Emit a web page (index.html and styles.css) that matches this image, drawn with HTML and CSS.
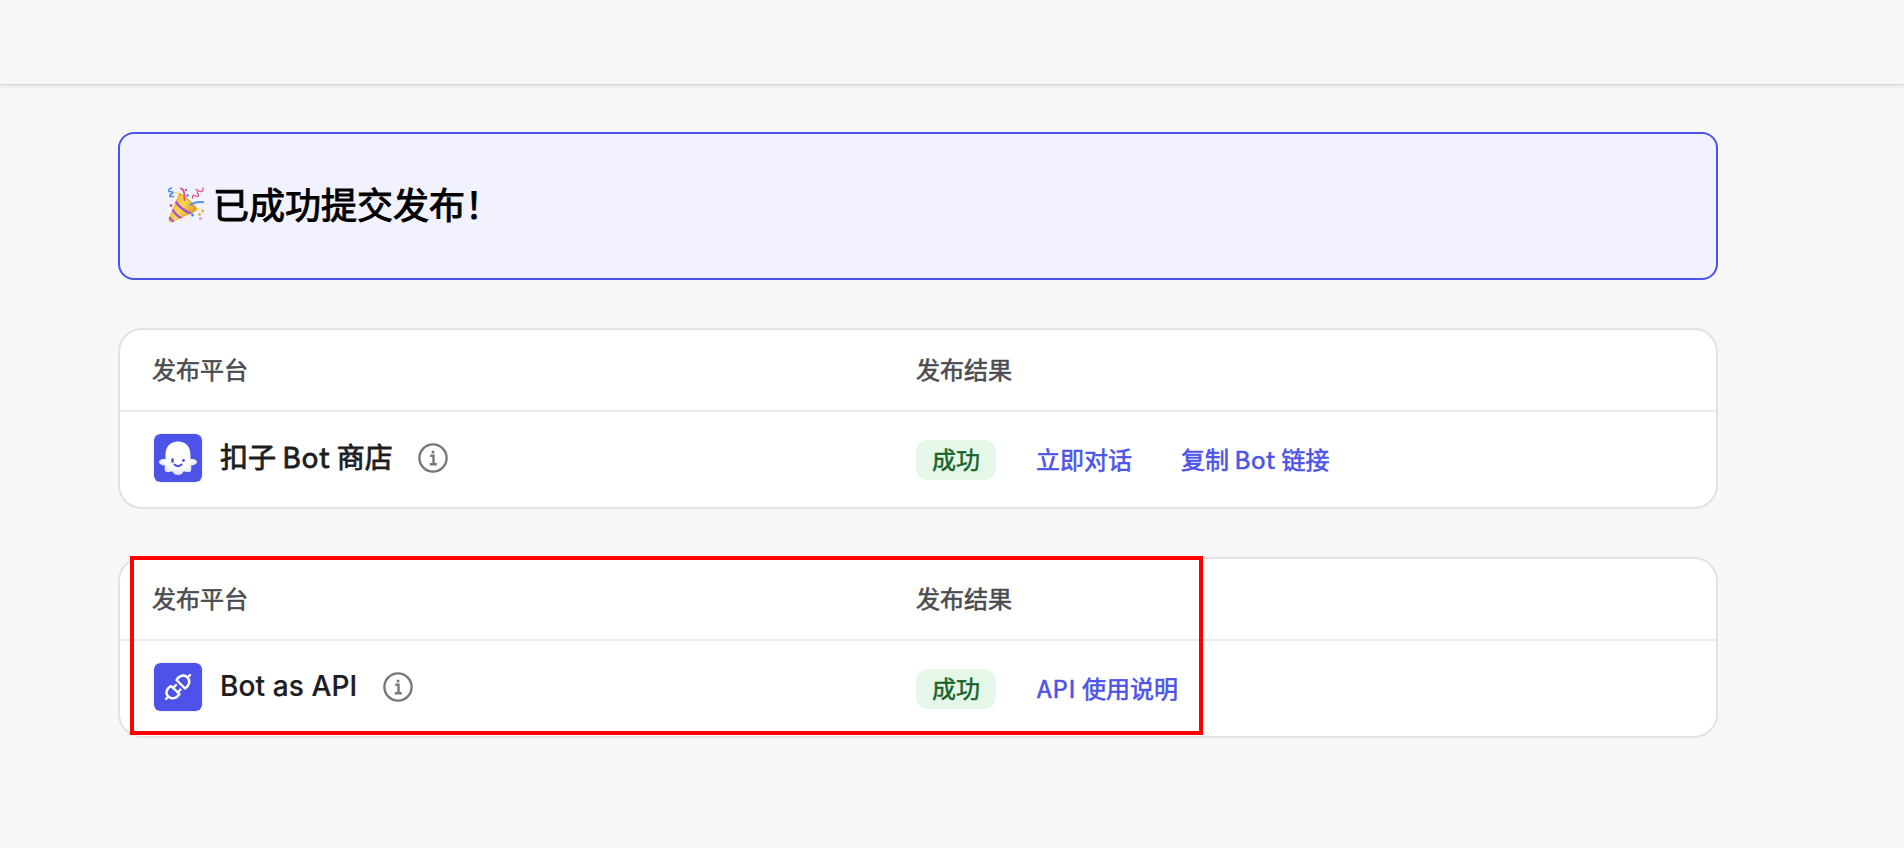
FILE: index.html
```html
<!DOCTYPE html>
<html lang="zh-CN">
<head>
<meta charset="utf-8">
<title>发布结果</title>
<link rel="stylesheet" href="styles.css">
</head>
<body>
<header class="topbar"></header>
<main class="content">
  <section class="banner">
    <svg class="party" viewBox="0 0 36 36" aria-hidden="true">
      <defs>
        <linearGradient id="cone" x1="0" y1="0.2" x2="1" y2="0.8">
          <stop offset="0" stop-color="#e5a52c"/><stop offset="0.45" stop-color="#fbd653"/><stop offset="1" stop-color="#d08a1c"/>
        </linearGradient>
        <clipPath id="coneClip"><path d="M11 6Q20 10 29 22Q28 25 22 27L4 35.5Q0 36 .5 32Z"/></clipPath>
      </defs>
      <path d="M11 6Q20 10 29 22Q28 25 22 27L4 35.5Q0 36 .5 32Z" fill="url(#cone)"/>
      <g clip-path="url(#coneClip)" fill="none" stroke="#a052d6" stroke-width="2.3">
        <path d="M7 14Q13 23 24 27M4 22Q8 29 15 32M0 29Q3 33 7 36"/>
      </g>
      <path d="M10.500 6Q20 10 29 22" fill="none" stroke="#c98a20" stroke-width=".8"/>
      <g fill="none" stroke-linecap="round">
        <path d="M13 1.500Q17 2.500 16.500 13" stroke="#ef4f78" stroke-width="2"/>
        <path d="M22 18Q27 14.500 35.500 15.200" stroke="#5c92ec" stroke-width="2"/>
        <path d="M3.500 1Q-.5 2.500 1 4.500Q5 4.500 5 6Q1 7.500 2 9.500L5.500 9.500" stroke="#5186df" stroke-width="1.500"/>
        <path d="M35 1Q35.500 5 32.500 4.500Q29 2.500 29.500 6Q32 10 28.500 9.500Q24 6 24.500 11" stroke="#dd5279" stroke-width="1.300"/>
      </g>
      <g fill="#4b82df"><circle cx="18" cy="3" r="1.200"/><circle cx="19.500" cy="8.500" r="1.300"/><circle cx="24.500" cy="28" r="1.400"/></g>
      <g fill="#dd5279"><circle cx="3" cy="18.500" r="1.400"/><circle cx="28.500" cy="2.800" r="1"/></g>
      <g fill="#f0ae4f"><circle cx="34.500" cy="24" r="1.500"/><circle cx="31.500" cy="27.500" r="1.400"/></g>
      <circle cx="30" cy="22.500" r="1.400" fill="#f5df68"/><circle cx="8" cy="6" r="1.300" fill="#f5df68"/>
      <circle cx="32.500" cy="31.500" r="1.600" fill="#eb9adf"/>
    </svg>
    <h1 class="banner-title">已成功提交发布！</h1>
  </section>

  <section class="card">
    <div class="row head"><div>发布平台</div><div>发布结果</div></div>
    <div class="row body">
      <div class="platform">
        <svg class="logo" viewBox="0 0 48 48" aria-hidden="true">
          <defs><radialGradient id="ghost" cx=".5" cy=".4" r=".6"><stop offset=".65" stop-color="#fff"/><stop offset="1" stop-color="#dedff5"/></radialGradient></defs>
          <rect width="48" height="48" rx="6" fill="#4d53e8"/>
          <path d="M11.500 21C11.500 12.500 16.500 7.500 24 7.500S36.500 12.500 36.500 21V25.500C38.500 24.500 42.800 25.500 43 28C43 30.300 39.500 31.500 37 31.500C37.500 34 37.700 37.500 35.500 38C33.500 38.500 31 37.500 29.500 37.500C28.500 40 26.500 41 24 41S19.500 40 18.500 37.500C17 37.500 14.500 38.500 12.500 38C10.300 37.500 10.500 34 11 31.500C8.500 31.500 5 30.300 5 28C5.200 25.500 9.500 24.500 11.500 25.500Z" fill="url(#ghost)"/>
          <g fill="none" stroke="#4d53e8" stroke-linecap="round"><path d="M18.500 25.500V27.500" stroke-width="2.500"/><path d="M20.500 30.500Q24 33.800 27.500 30.500" stroke-width="2"/></g>
          <circle cx="29.500" cy="26.500" r="1.400" fill="#4d53e8"/>
        </svg>
        <span class="name">扣子 <span class="word">Bot</span> 商店</span>
        <svg class="info" viewBox="0 0 30 30" aria-hidden="true"><circle cx="15" cy="15" r="13.600"/><path d="M12.200 12.700H15.500V21.300M11.800 21.300H18.800"/><circle class="dot" cx="15" cy="8.900" r="1.500"/></svg>
      </div>
      <div class="result"><span class="tag">成功</span><a class="link">立即对话</a><a class="link">复制 <span class="word">Bot</span> 链接</a></div>
    </div>
  </section>

  <section class="card marked">
    <div class="row head"><div>发布平台</div><div>发布结果</div></div>
    <div class="row body">
      <div class="platform">
        <svg class="logo" viewBox="0 0 48 48" aria-hidden="true">
          <rect width="48" height="48" rx="6" fill="#4d53e8"/>
          <g fill="none" stroke="#fff" stroke-width="2.400" stroke-linecap="round" stroke-linejoin="round">
            <path d="M12 36L14.500 33.500M33.500 14.500L36 12"/>
            <path d="M17 23C12 26 11 31 14.500 33.500C17.500 37 23 35 25.500 31Z"/>
            <path d="M22.500 17C25 12.500 30.500 11 33.500 14.500C37 18 35 23 31 25.500Z"/>
            <path d="M19 25L22 22M23.500 29.500L26.500 26.500"/>
          </g>
        </svg>
        <span class="name latin">Bot as API</span>
        <svg class="info" viewBox="0 0 30 30" aria-hidden="true"><circle cx="15" cy="15" r="13.600"/><path d="M12.200 12.700H15.500V21.300M11.800 21.300H18.800"/><circle class="dot" cx="15" cy="8.900" r="1.500"/></svg>
      </div>
      <div class="result"><span class="tag">成功</span><a class="link doc"><span class="word">API</span> 使用说明</a></div>
    </div>
    <div class="marker"></div>
  </section>
</main>
</body>
</html>
```
FILE: styles.css
```css
* { box-sizing: border-box; }
html { overflow: hidden; }
body {
  margin: 0;
  height: 848px;
  overflow: hidden;
  background: #f7f7fa;
  font-family: "Noto Sans CJK SC", sans-serif;
  font-size: 24px;
  font-weight: 400;
  line-height: 32px;
}
.topbar {
  height: 84px;
  box-shadow: 0 1px 1px rgba(0, 0, 0, .08), 0 2px 6px rgba(0, 0, 0, .08);
  background: #f7f7fa;
}
.content {
  width: 1600px;
  margin: 48px 0 0 118px;
  display: flex;
  flex-direction: column;
  gap: 48px;
}
.banner {
  height: 148px;
  padding: 0 48px 2px;
  border: 2px solid #4d53e8;
  border-radius: 16px;
  background: #f1f2fd;
  display: flex;
  align-items: center;
  gap: 9px;
}
.party { width: 36px; height: 36px; }
.banner-title {
  margin: 0;
  padding-bottom: 4px;
  font-size: 36px;
  line-height: 48px;
  font-weight: 400;
  color: #000;
  -webkit-text-stroke: 1px #000;
}
.card {
  position: relative;
  height: 181px;
  border: 2px solid #e2e2e3;
  border-radius: 24px;
  background: #fff;
}
.row {
  display: grid;
  grid-template-columns: 764px 1fr;
  padding: 0 32px;
}
.head {
  height: 82px;
  padding-top: 23px;
  border-bottom: 2px solid #ebebec;
  color: #4b4c50;
  -webkit-text-stroke: .6px #4b4c50;
}
.body {
  height: 95px;
  align-items: start;
}
.platform, .result { display: flex; align-items: center; }
.platform { padding-top: 22px; }
.result { padding-top: 28px; }
.logo {
  width: 48px;
  height: 48px;
  margin-left: 2px;
  border-radius: 6px;
  box-shadow: 0 0 0 1px #efeff0;
}
.name {
  margin-left: 18px;
  padding-bottom: 4px;
  font-size: 28px;
  line-height: 40px;
  color: #1c1d23;
  -webkit-text-stroke: .8px #1c1d23;
}
.word { letter-spacing: .9px; }
.latin {
  padding-bottom: 2px;
  font-family: Inter, sans-serif;
  font-weight: 500;
  letter-spacing: .1px;
  -webkit-text-stroke: .2px #1c1d23;
}
.info {
  width: 30px;
  height: 30px;
  margin-left: 25px;
  fill: none;
  stroke: #77787d;
  stroke-width: 2.400;
}
.latin + .info { margin-left: 26px; }
.info .dot { fill: #77787d; stroke: none; }
.tag {
  width: 80px;
  height: 40px;
  line-height: 38px;
  margin-right: 40px;
  border-radius: 12px;
  background: #e5f7e8;
  color: #18632b;
  text-align: center;
  -webkit-text-stroke: .5px #18632b;
}
.link {
  color: #4d53e8;
  margin-right: 49px;
  padding-bottom: 2px;
  -webkit-text-stroke: .6px #4d53e8;
}
.doc { margin-left: 1px; }
.marker {
  position: absolute;
  left: 10px;
  top: -3px;
  width: 1073px;
  height: 179px;
  border: 4px solid #f00;
}
```
